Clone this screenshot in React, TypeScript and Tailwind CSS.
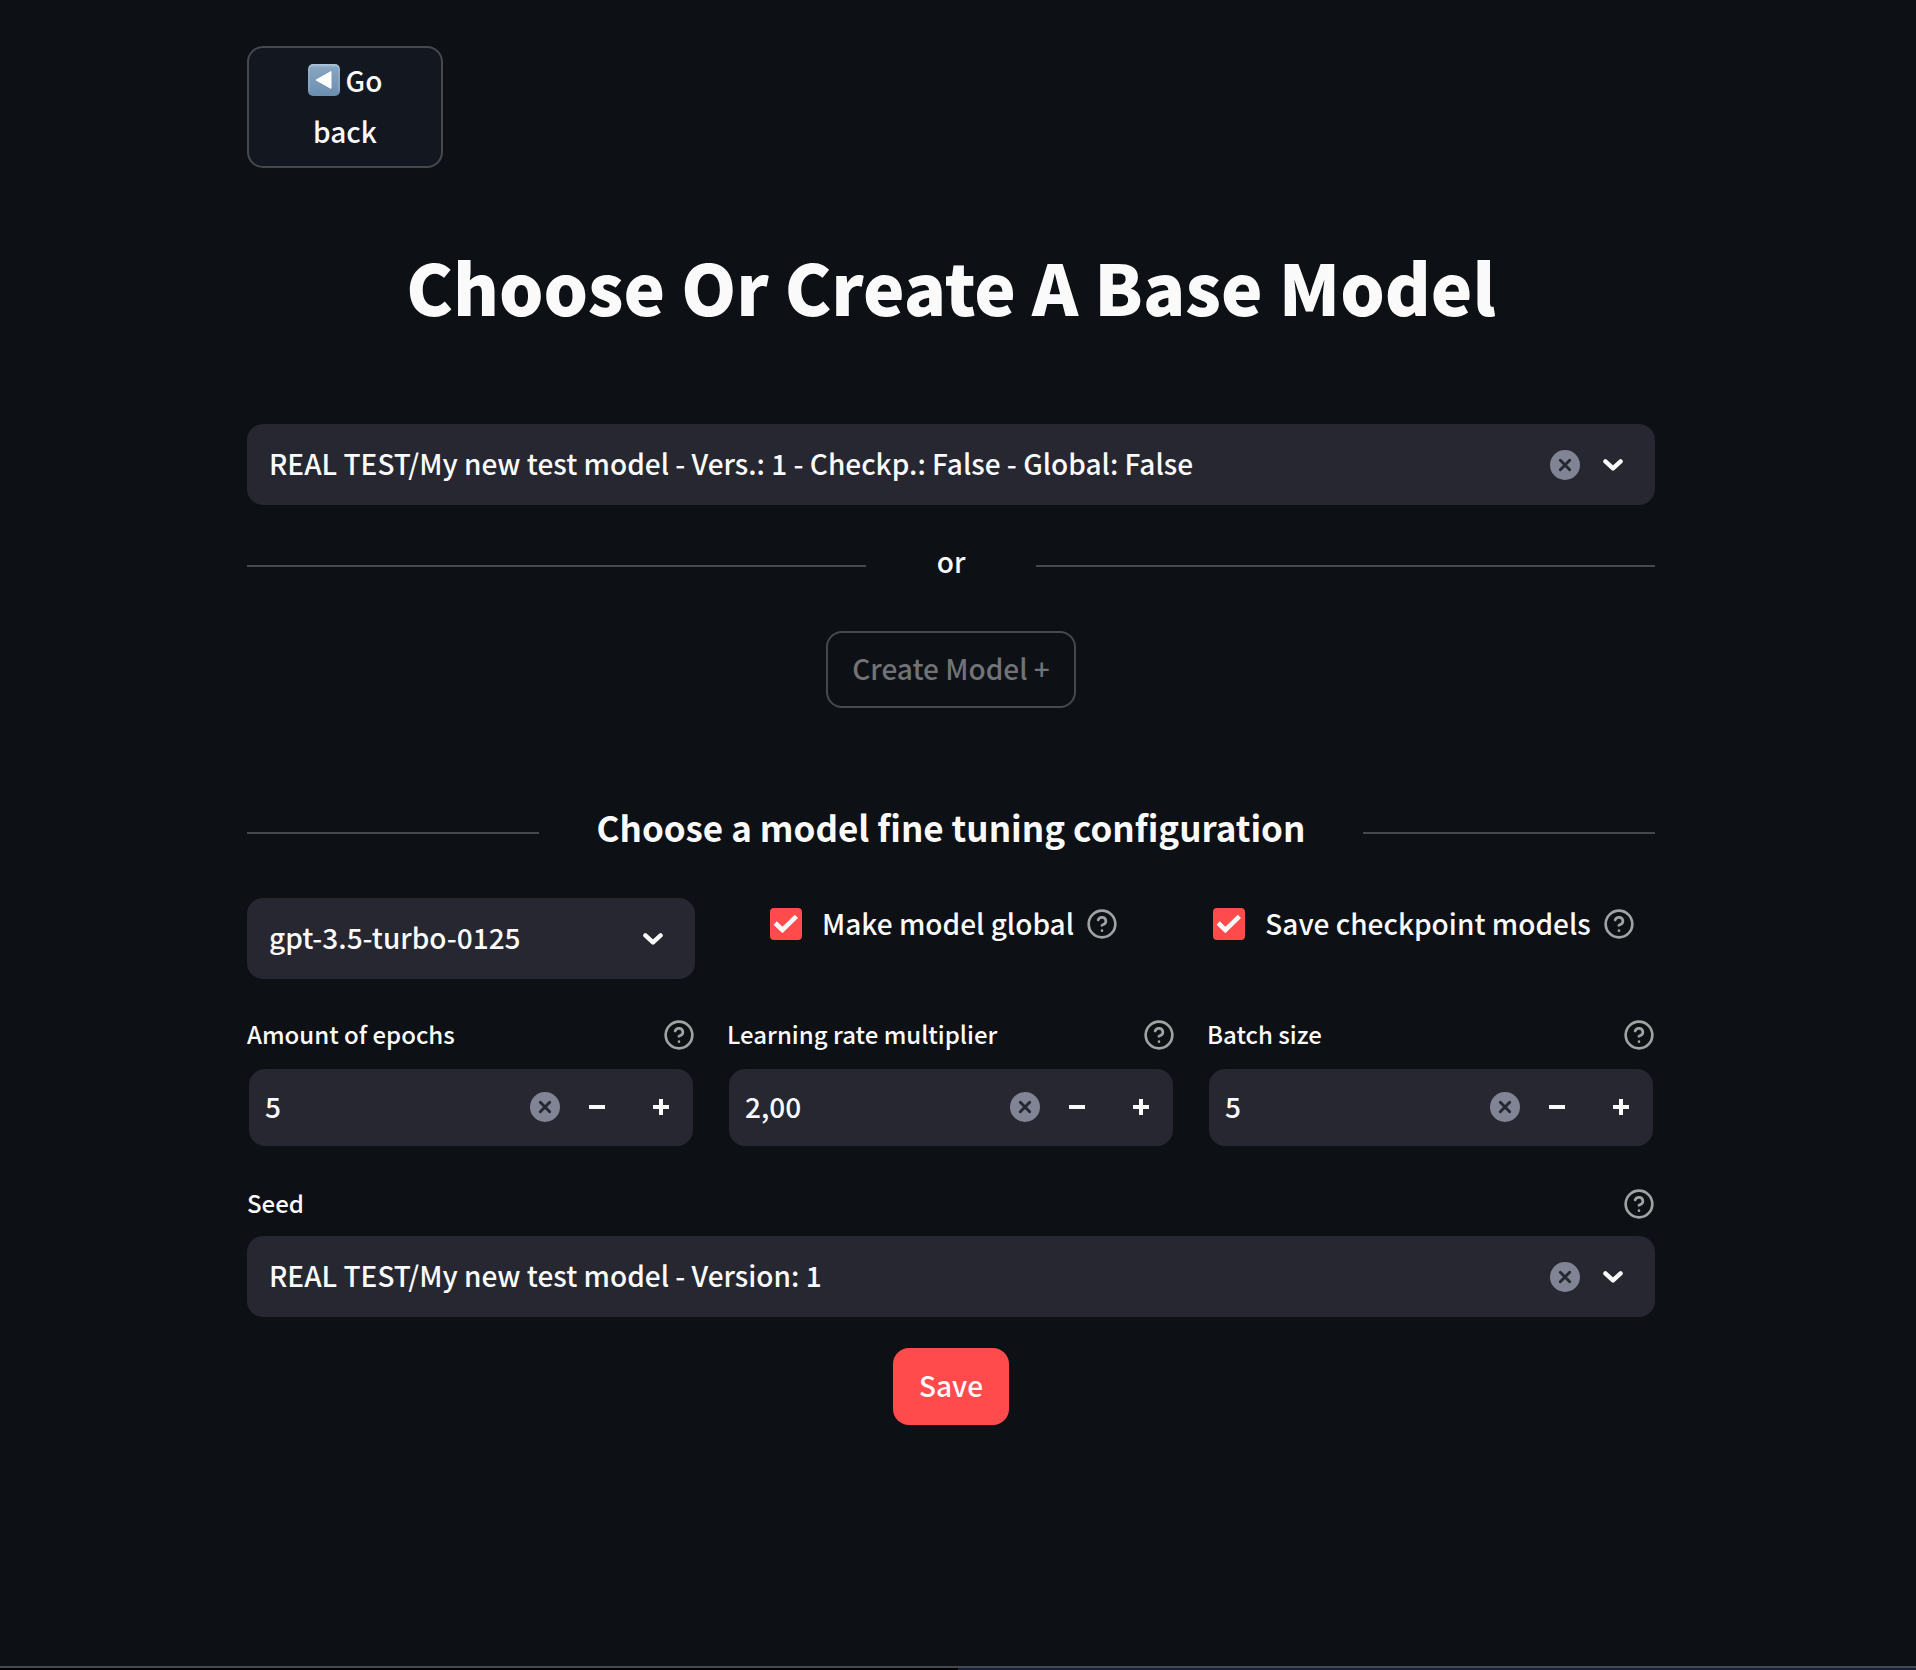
import { useState } from "react";
import type { ReactNode } from "react";

function ChevronIcon() {
  return (
    <svg
      className="pointer-events-none h-3 w-5 shrink-0"
      viewBox="0 0 20 12"
      fill="none"
      stroke="currentColor"
      strokeWidth="4.4"
      strokeLinecap="round"
      strokeLinejoin="round"
      aria-hidden="true"
    >
      <path d="M2.4 2.4 10 9.4l7.6-7" />
    </svg>
  );
}

function ClearButton({ label, onClick }: { label: string; onClick?: () => void }) {
  return (
    <button type="button" aria-label={label} onClick={onClick} className="size-[30px] shrink-0">
      <svg viewBox="0 0 30 30" className="size-[30px]" aria-hidden="true">
        <circle cx="15" cy="15" r="15" fill="#808495" />
        <path
          d="m10.3 10.3 9.4 9.4m0-9.4-9.4 9.4"
          fill="none"
          stroke="#262730"
          strokeWidth="2.9"
          strokeLinecap="round"
        />
      </svg>
    </button>
  );
}

function Help({ label }: { label: string }) {
  return (
    <button type="button" aria-label={label} className="size-8 shrink-0 text-[#a1a2a4]">
      <svg
        viewBox="0 0 24 24"
        className="size-8"
        fill="none"
        stroke="currentColor"
        strokeWidth="2"
        strokeLinecap="round"
        strokeLinejoin="round"
        aria-hidden="true"
      >
        <circle cx="12" cy="12" r="10" />
        <path d="M9.09 9a3 3 0 0 1 5.83 1c0 2-3 3-3 3" />
        <path d="M12 17h.01" />
      </svg>
    </button>
  );
}

function BackEmoji() {
  return (
    <svg viewBox="0 0 32 32" className="mr-1.5 inline-block size-8 align-[-4px]" aria-hidden="true">
      <defs>
        <linearGradient id="tile" x1="0" y1="0" x2="0" y2="1">
          <stop offset="0" stopColor="#a9c3da" />
          <stop offset="0.12" stopColor="#86a5c2" />
          <stop offset="1" stopColor="#6c8eae" />
        </linearGradient>
      </defs>
      <rect width="32" height="32" rx="5" fill="url(#tile)" />
      <path d="M1 27v-22a4 4 0 0 1 4-4h22a4 4 0 0 1 4 4v22" fill="none" stroke="#b4cbdf" strokeOpacity="0.5" />
      <path d="M8 16 23 7.6v16.8z" fill="#fff" stroke="#fff" strokeLinejoin="round" />
    </svg>
  );
}

function SelectBox({
  id,
  label,
  value,
  clearable,
}: {
  id: string;
  label?: string;
  value: string;
  clearable?: boolean;
}) {
  return (
    <div className="flex h-[81px] items-center rounded-2xl bg-[#262730] pr-8">
      <select
        id={id}
        aria-label={label}
        className="h-full min-w-0 flex-1 appearance-none bg-transparent pb-0.5 pl-[22px] outline-none"
      >
        <option>{value}</option>
      </select>
      {clearable && (
        <div className="mr-[23px] flex">
          <ClearButton label="Clear selection" />
        </div>
      )}
      <ChevronIcon />
    </div>
  );
}

function Divider({ columns, children }: { columns: string; children: ReactNode }) {
  return (
    <div className={`grid items-center ${columns}`}>
      <hr className="border-t-2 border-[#46494d]" />
      {children}
      <hr className="border-t-2 border-[#46494d]" />
    </div>
  );
}

function CheckboxField({ id, label }: { id: string; label: string }) {
  return (
    <div className="flex h-[52px] items-center justify-center pr-3.5">
      <div className="grid shrink-0">
        <input
          id={id}
          type="checkbox"
          defaultChecked
          className="peer col-start-1 row-start-1 size-8 appearance-none rounded border-2 border-[#46494d] checked:border-[#ff4b4b] checked:bg-[#ff4b4b]"
        />
        <svg
          viewBox="0 0 32 32"
          className="pointer-events-none invisible col-start-1 row-start-1 size-8 peer-checked:visible"
          fill="none"
          stroke="#fafafa"
          strokeWidth="4.6"
          aria-hidden="true"
        >
          <path d="m5.2 15 7.2 7L26.4 8.4" />
        </svg>
      </div>
      <label htmlFor={id} className="mr-3 ml-5 pb-0.5 leading-[48px] whitespace-nowrap">
        {label}
      </label>
      <Help label={`Help: ${label}`} />
    </div>
  );
}

function FieldLabel({ id, label }: { id: string; label: string }) {
  return (
    <div className="flex h-10 items-center justify-between">
      <label htmlFor={id} className="pb-0.5 text-2xl leading-9">
        {label}
      </label>
      <Help label={`Help: ${label}`} />
    </div>
  );
}

function NumberField({ id, label, initial }: { id: string; label: string; initial: string }) {
  const [value, setValue] = useState(initial);
  const step = (amount: number) => {
    const digits = initial.includes(",") ? 2 : 0;
    const next = Number(value.replace(",", ".")) + amount;
    setValue(next.toFixed(digits).replace(".", ","));
  };
  return (
    <div>
      <FieldLabel id={id} label={label} />
      <div className="mx-0.5 mt-3.5 flex h-[77px] items-center overflow-hidden rounded-2xl bg-[#262730] pb-px">
        <input
          id={id}
          type="text"
          inputMode="decimal"
          value={value}
          onChange={(event) => setValue(event.target.value)}
          className="h-full min-w-0 flex-1 bg-transparent pb-0.5 pl-4 outline-none"
        />
        <div className="mr-[5px] flex">
          <ClearButton label={`Clear ${label}`} onClick={() => setValue("")} />
        </div>
        <button
          type="button"
          aria-label={`Decrease ${label}`}
          onClick={() => step(-1)}
          className="grid h-full w-16 place-items-center"
        >
          <svg viewBox="0 0 16 16" className="size-4" fill="currentColor" aria-hidden="true">
            <path d="M0 6h16v4H0z" />
          </svg>
        </button>
        <button
          type="button"
          aria-label={`Increase ${label}`}
          onClick={() => step(1)}
          className="grid h-full w-16 place-items-center"
        >
          <svg viewBox="0 0 16 16" className="size-4" fill="currentColor" aria-hidden="true">
            <path d="M0 6h6V0h4v6h6v4h-6v6H6v-6H0z" />
          </svg>
        </button>
      </div>
    </div>
  );
}

export default function App() {
  return (
    <div className="flex min-h-screen flex-col bg-[#0d1015] font-['Noto_Sans_CJK_SC','Source_Sans_Pro',sans-serif] text-[28px] leading-[51px] font-medium text-[#fafafa]">
      <main className="flex-1 pt-[46px] pr-3.5 pb-20">
        <div className="mx-auto max-w-[1408px]">
          <button
            type="button"
            className="w-[196px] rounded-2xl border-2 border-[#46494d] bg-[#131720] px-8 pt-[7px] pb-[9px]"
          >
            <BackEmoji />
            Go back
          </button>

          <h1 className="mt-[70px] text-center text-[70px] leading-[96px] font-black">
            Choose Or Create A Base Model
          </h1>

          <div className="mt-[90px]">
            <SelectBox
              id="base-model"
              label="Base model"
              value="REAL TEST/My new test model - Vers.: 1 - Checkp.: False - Global: False"
              clearable
            />
          </div>

          <div className="mt-[31px]">
            <Divider columns="grid-cols-[619fr_170fr_619fr]">
              <span className="pb-2 text-center">or</span>
            </Divider>
          </div>

          <div className="mt-9 flex justify-center">
            <button
              type="button"
              disabled
              className="h-[77px] rounded-2xl border-2 border-[#46494d] px-6 pb-0.5 text-[#717376]"
            >
              Create Model +
            </button>
          </div>

          <div className="mt-[90px]">
            <Divider columns="grid-cols-[292fr_824fr_292fr]">
              <h3 className="pb-3 text-center text-[35px] leading-[58px] font-bold">
                Choose a model fine tuning configuration
              </h3>
            </Divider>
          </div>

          <div className="mt-[30px] grid grid-cols-3 gap-8">
            <SelectBox id="model" label="Model" value="gpt-3.5-turbo-0125" />
            <CheckboxField id="global" label="Make model global" />
            <CheckboxField id="checkpoints" label="Save checkpoint models" />
          </div>

          <div className="mt-9 grid grid-cols-3 gap-8">
            <NumberField id="epochs" label="Amount of epochs" initial="5" />
            <NumberField id="rate" label="Learning rate multiplier" initial="2,00" />
            <NumberField id="batch" label="Batch size" initial="5" />
          </div>

          <div className="mt-[38px]">
            <FieldLabel id="seed" label="Seed" />
            <div className="mt-3">
              <SelectBox id="seed" value="REAL TEST/My new test model - Version: 1" clearable />
            </div>
          </div>

          <div className="mt-[31px] flex justify-center">
            <button type="button" className="h-[77px] rounded-2xl bg-[#ff4b4b] px-[26px] pb-0.5">
              Save
            </button>
          </div>
        </div>
      </main>
      <footer className="border-t-2 border-[#46494d]">
        <div className="h-0.5 bg-linear-to-r from-black from-50% to-[#15203a] to-50%" />
      </footer>
    </div>
  );
}
